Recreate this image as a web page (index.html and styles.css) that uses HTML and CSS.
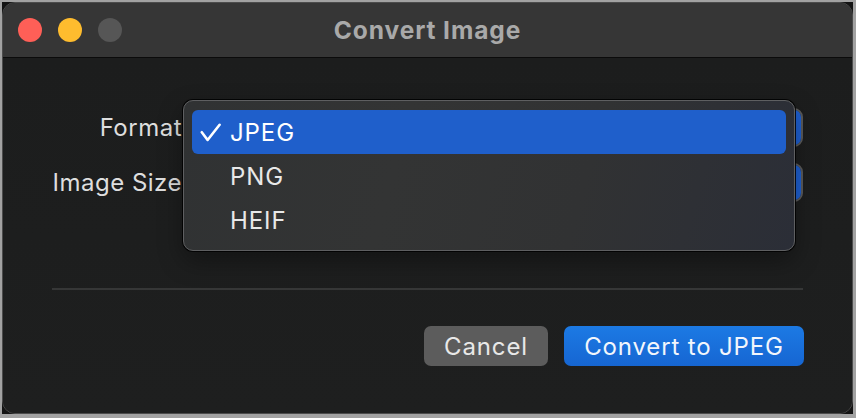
FILE: index.html
```html
<!DOCTYPE html>
<html>
<head>
<meta charset="utf-8">
<link rel="stylesheet" href="styles.css">
</head>
<body>
<div class="frame">
  <div class="window">
    <div class="titlebar">
      <div class="lights">
        <span class="light red"></span>
        <span class="light yellow"></span>
        <span class="light gray"></span>
      </div>
      <div class="title">Convert Image</div>
      <div></div>
    </div>
    <div class="content">
      <div class="form">
        <div class="label">Format</div>
        <div class="popup"><span class="popup-arrows"></span></div>
        <div class="label">Image Size</div>
        <div class="popup"><span class="popup-arrows"></span></div>
      </div>
      <div class="sep"></div>
      <div class="actions">
        <button class="btn cancel">Cancel</button>
        <button class="btn primary">Convert to JPEG</button>
      </div>
    </div>
    <div class="menu">
      <div class="item selected">
        <span class="check"><svg width="22" height="20" viewBox="0 0 22 20"><path d="M1.8 9.2 L7.6 17 L19.6 1.8" fill="none" stroke="#ffffff" stroke-width="2.6" stroke-linecap="round" stroke-linejoin="round"/></svg></span>
        <span class="item-text">JPEG</span>
      </div>
      <div class="item">
        <span class="check"></span>
        <span class="item-text">PNG</span>
      </div>
      <div class="item">
        <span class="check"></span>
        <span class="item-text">HEIF</span>
      </div>
    </div>
  </div>
</div>
</body>
</html>
```

FILE: styles.css
```css
* { box-sizing: border-box; }

html, body {
  margin: 0;
  height: 418px;
}

body {
  background: #a2a2a2;
  padding: 2px 3px 4px 2px;
  font-family: Inter, "Noto Sans", sans-serif;
  overflow: hidden;
}

.frame {
  background: #131313;
  height: 100%;
}

.window {
  position: relative;
  height: 100%;
  border-radius: 13px;
  border: 1px solid #4c4c4c;
  overflow: hidden;
  display: flex;
  flex-direction: column;
  background: #1e1f1f;
}

.titlebar {
  height: 55px;
  flex: none;
  background: #363636;
  border-bottom: 1px solid #0b0b0b;
  display: grid;
  grid-template-columns: 1fr auto 1fr;
  align-items: center;
}

.lights {
  display: flex;
  gap: 16px;
  padding-left: 15px;
}

.light {
  width: 24px;
  height: 24px;
  border-radius: 50%;
  display: block;
}
.light.red { background: #fe5f57; }
.light.yellow { background: #febc2e; }
.light.gray { background: #565656; }

.title {
  color: #a9a9a9;
  font-weight: 700;
  font-size: 24.5px;
  letter-spacing: 0.9px;
}

.content {
  flex: 1;
  padding: 50px 49px 0 49px;
  background: linear-gradient(180deg, #1c1d1d 0%, #1e1f1f 100%);
}

.form {
  display: grid;
  grid-template-columns: 130px 1fr;
  column-gap: 8px;
  row-gap: 16px;
  align-items: center;
}

.label {
  text-align: right;
  color: #dedede;
  font-size: 24px;
  letter-spacing: 0.5px;
  white-space: nowrap;
}

.popup {
  height: 39px;
  border-radius: 9px;
  border: 2px solid #5a5a5a;
  background: #2c2c2c;
  position: relative;
  display: flex;
  justify-content: flex-end;
}

.popup-arrows {
  width: 30px;
  height: 100%;
  background: #1e5fd0;
  border-radius: 0 7px 7px 0;
}

.sep {
  height: 2px;
  background: #363737;
  margin-top: 86px;
}

.actions {
  display: flex;
  justify-content: flex-end;
  gap: 16px;
  margin-top: 36px;
  margin-right: -1px;
}

.btn {
  height: 40px;
  border: none;
  border-radius: 7px;
  font-family: Inter, "Noto Sans", sans-serif;
  font-size: 24px;
  letter-spacing: 0.85px;
  color: #e8e8e8;
  padding: 0;
}

.cancel {
  width: 124px;
  background: #5c5c5c;
}

.primary {
  width: 240px;
  background: linear-gradient(180deg, #1c7ae4 0%, #1666d2 100%);
  color: #f2f6fc;
}

.menu {
  position: absolute;
  left: 180px;
  top: 97px;
  width: 612px;
  height: 151px;
  border-radius: 10px;
  border: 1px solid #5e5f61;
  box-shadow: 0 0 0 1px rgba(0,0,0,0.85), 0 10px 24px rgba(0,0,0,0.35);
  background: linear-gradient(105deg, #303233 0%, #333434 35%, #313233 65%, #2b2e37 100%);
  padding: 9px 8px 8px 8px;
  display: flex;
  flex-direction: column;
}

.item {
  height: 44px;
  display: flex;
  align-items: center;
  border-radius: 6px;
  color: #e8e8e8;
  font-size: 24px;
}

.item.selected {
  background: #1f5fcb;
  color: #ffffff;
}

.check {
  width: 38px;
  flex: none;
  display: flex;
  align-items: center;
  padding-left: 8px;
  padding-top: 1px;
}

.check svg { display: block; }

.item-text {
  letter-spacing: 0.9px;
}
```
